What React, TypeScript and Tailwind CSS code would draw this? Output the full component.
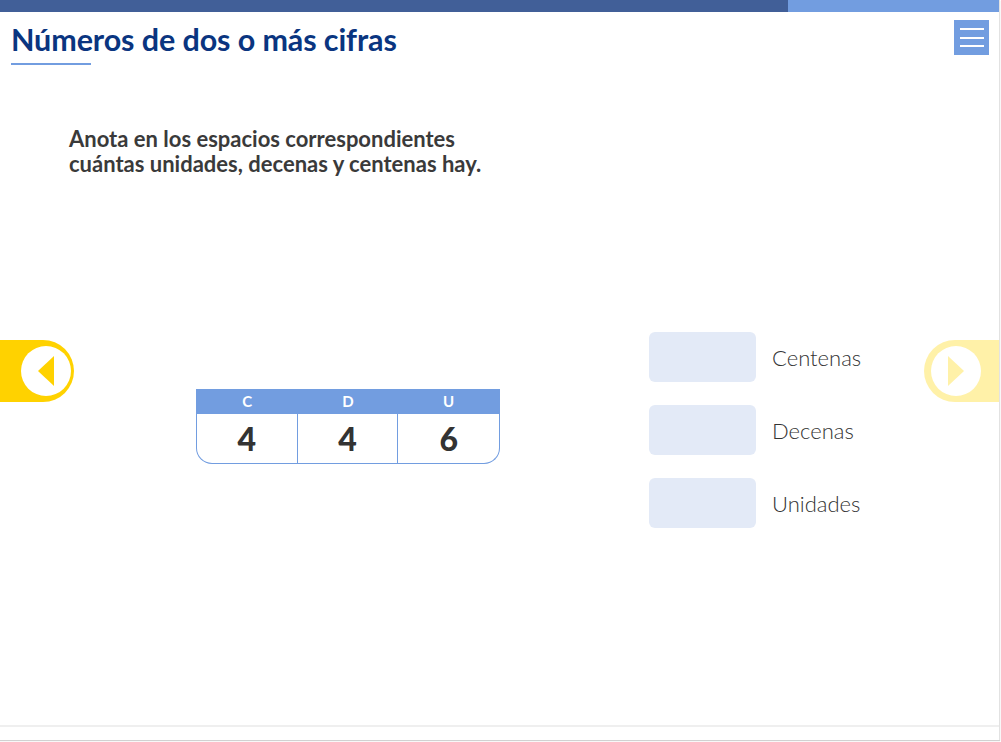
import React from 'react';

const PLACES = [
  { head: 'C', value: '4' },
  { head: 'D', value: '4' },
  { head: 'U', value: '6' },
];

const ANSWERS = ['Centenas', 'Decenas', 'Unidades'];

function NavButton({ side }: { side: 'left' | 'right' }) {
  const left = side === 'left';
  return (
    <button
      className={`absolute top-[340px] flex h-[62px] items-center ${
        left
          ? 'left-0 w-[74px] justify-end rounded-r-full bg-[#ffd200] pr-[3px]'
          : 'right-0 w-[75px] justify-start rounded-l-full bg-[#fff1a8] pl-[7px]'
      }`}
      aria-label={left ? 'Anterior' : 'Siguiente'}
    >
      <span className="flex h-[50px] w-[50px] items-center justify-center rounded-full bg-white">
        <svg width="20" height="32" viewBox="0 0 20 32" aria-hidden="true">
          {left ? (
            <path d="M18 1 L2 16 L18 31 Z" fill="#ffd200" />
          ) : (
            <path d="M2 1 L18 16 L2 31 Z" fill="#fff1a8" />
          )}
        </svg>
      </span>
    </button>
  );
}

export default function App() {
  return (
    <div className="relative h-[742px] w-[1001px] overflow-hidden bg-white font-['Lato','Open_Sans',sans-serif]">
      <div className="relative h-[740px] w-[1000px] border-r border-[#e2e2e2] shadow-[0_1px_1px_rgba(0,0,0,0.18)]">
        {/* top progress bar */}
        <div className="flex h-[12px] w-[999px]">
          <div className="w-[788px] bg-[#415f98]" />
          <div className="flex-1 bg-[#729de0]" />
        </div>

        {/* header */}
        <header className="flex items-start justify-between pl-[11px] pr-[10px] pt-[8px]">
          <div>
            <h1 className="text-[30.5px] font-bold leading-[38px] tracking-[-0.1px] text-[#0a3580]">
              Números de dos o más cifras
            </h1>
            <div className="mt-[5px] h-[2px] w-[80px] bg-[#729de0]" />
          </div>
          <button
            className="flex h-[35px] w-[35px] flex-col items-center justify-center gap-[6.5px] bg-[#729de0]"
            aria-label="Menú"
          >
            <span className="h-[2px] w-[24px] bg-white" />
            <span className="h-[2px] w-[24px] bg-white" />
            <span className="h-[2px] w-[24px] bg-white" />
          </button>
        </header>

        {/* body */}
        <main className="h-[660px] pt-[61px]">
          <p className="pl-[69px] text-[22px] font-bold leading-[25px] text-[#3a3a3a]">
            Anota en los espacios correspondientes
            <br />
            cuántas unidades, decenas y centenas hay.
          </p>

          <div className="mt-[156px] flex items-start">
            <div className="ml-[196px] mt-[57px] w-[304px] overflow-hidden rounded-b-[16px] border border-t-0 border-[#729de0]">
              <div className="grid h-[25px] grid-cols-3 bg-[#729de0] text-[15px] font-bold leading-[25px] text-white">
                {PLACES.map((p) => (
                  <span key={p.head} className="text-center">{p.head}</span>
                ))}
              </div>
              <div className="grid h-[49px] grid-cols-3 divide-x divide-[#729de0]">
                {PLACES.map((p, i) => (
                  <span
                    key={i}
                    className="flex items-center justify-center text-[32px] font-black text-[#333333]"
                  >
                    {p.value}
                  </span>
                ))}
              </div>
            </div>

            <div className="ml-[149px] flex flex-col gap-[23px]">
              {ANSWERS.map((a) => (
                <div key={a} className="flex items-center gap-[16px]">
                  <input
                    aria-label={a}
                    className="h-[50px] w-[107px] rounded-[6px] bg-[#e3eaf7] outline-none"
                  />
                  <span className="text-[22px] font-light text-[#333333]">{a}</span>
                </div>
              ))}
            </div>
          </div>
        </main>

        {/* footer rule */}
        <div className="h-[2px] bg-[#efefef]" />

        <NavButton side="left" />
        <NavButton side="right" />
      </div>
    </div>
  );
}
